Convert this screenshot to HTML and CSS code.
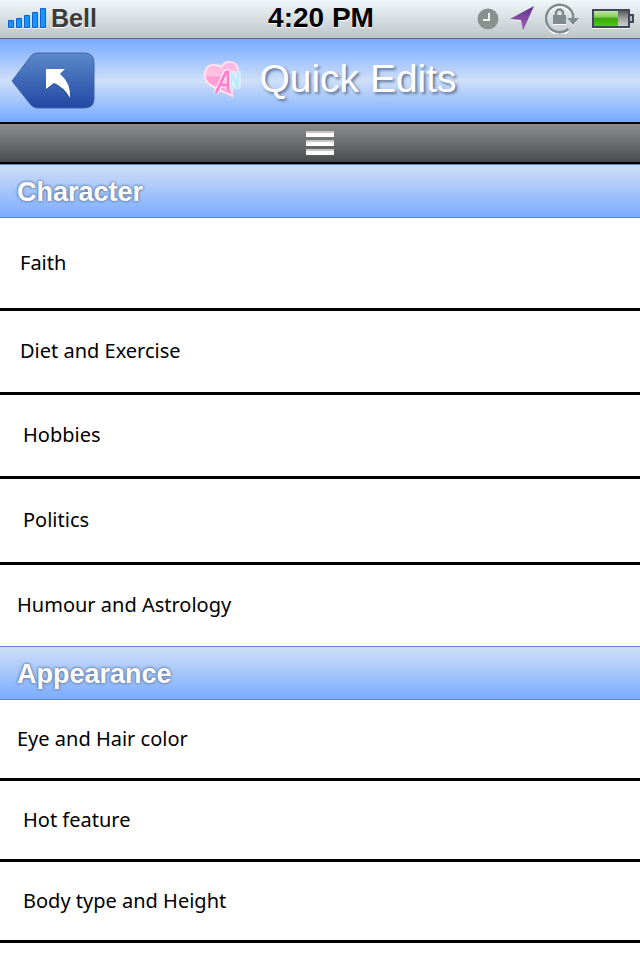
FILE: index.html
```html
<!DOCTYPE html>
<html lang="en">
<head>
<meta charset="utf-8">
<meta name="viewport" content="width=device-width, initial-scale=1">
<title>Quick Edits</title>
<link rel="stylesheet" href="styles.css">
</head>
<body>
<div class="status">
  <div class="carrier">
    <svg width="40" height="22" viewBox="0 0 40 22" aria-hidden="true">
      <g fill="#fff" opacity=".7"><path d="M0 21h6v1H0zM8 21h6v1H8zM16 21h6v1h-6zM24 21h6v1h-6zM32 21h6v1h-6z"/></g>
      <g fill="#1695fb" stroke="#1260cf"><path d="M.5 13.500h5v7h-5zM8.500 11.500h5v9h-5zM16.500 8.500h5v12h-5zM24.500 5.500h5v15h-5zM32.500 1.500h5v19h-5z"/></g>
    </svg>
    <span>Bell</span>
  </div>
  <div class="time">4:20 PM</div>
  <div class="indicators">
    <svg width="22" height="24" viewBox="0 0 22 24" aria-hidden="true">
      <circle cx="11" cy="14" r="10" fill="#fff" opacity=".7"/>
      <circle cx="11" cy="13" r="10.500" fill="#87928f"/>
      <path d="M12 7v7H6" fill="none" stroke="#f0f5f5" stroke-width="2"/>
    </svg>
    <svg width="24" height="28" viewBox="0 0 24 28" aria-hidden="true">
      <defs><linearGradient id="arrow" x1="0" y1="0" x2="0" y2="1"><stop offset="0" stop-color="#5c2f8c"/><stop offset="1" stop-color="#a767b4"/></linearGradient></defs>
      <path d="M24 3 0 16l11 1 2 11z" fill="#fff" opacity=".7"/>
      <path d="M24 2 0 15l11 1 2 11z" fill="url(#arrow)"/>
    </svg>
    <svg width="36" height="32" viewBox="0 0 36 32" aria-hidden="true">
      <path d="M23.500 28A13.700 13.700 0 1 1 28 14v4" fill="none" stroke="#fff" stroke-width="2" transform="translate(0 1)"/>
      <path d="M23.500 27A13.700 13.700 0 1 1 28 13v4" fill="none" stroke="#7f8c8b" stroke-width="2.500"/>
      <path d="M22 16h12l-6 8z" fill="#fff"/>
      <path d="M22 16h12l-6 7z" fill="#7f8c8b"/>
      <path d="M8 13h13v9H8z" fill="#7f8c8b"/>
      <path d="M11 14v-3a3.500 3.500 0 0 1 7 0v3" fill="none" stroke="#7f8c8b" stroke-width="2.500"/>
      <path d="M8 22.500h13" stroke="#fff"/>
    </svg>
    <svg width="42" height="22" viewBox="0 0 42 22" aria-hidden="true">
      <defs>
        <linearGradient id="charge" x1="0" y1="0" x2="0" y2="1"><stop offset="0" stop-color="#bde8a4"/><stop offset=".4" stop-color="#83cd55"/><stop offset=".5" stop-color="#3fa70d"/><stop offset="1" stop-color="#4fc90e"/></linearGradient>
        <linearGradient id="empty" x1="0" y1="0" x2="0" y2="1"><stop offset="0" stop-color="#505050"/><stop offset=".5" stop-color="#a0a0a0"/><stop offset="1" stop-color="#d6d6d6"/></linearGradient>
      </defs>
      <path d="M0 21h38v1H0z" fill="#fff" opacity=".8"/>
      <path d="M1 3h36v17H1z" fill="url(#empty)" stroke="#41465c" stroke-width="2"/>
      <path d="M2 4h24v15H2z" fill="url(#charge)"/>
      <path d="M38 8h3v7h-3" fill="#b7bdc1" stroke="#41465c" stroke-width="2"/>
    </svg>
  </div>
</div>

<header class="titlebar">
  <button class="back" type="button" aria-label="Back">
    <svg width="84" height="58" viewBox="0 0 84 58" aria-hidden="true">
      <defs><linearGradient id="btn" x1="0" y1="0" x2="0" y2="1"><stop offset="0" stop-color="#5b89ca"/><stop offset="1" stop-color="#2248a3"/></linearGradient></defs>
      <path d="M1 29 20 4q3-3 6-3h47q10 0 10 10v36q0 9-10 9H26q-3 0-6-3z" fill="url(#btn)" stroke="#3c64b3"/>
      <path d="M35 18h19l-5 5q11 9 10 25Q53 36 43 32l-8 6z" fill="#1d3c82" opacity=".6"/>
      <path d="M35 17h19l-5 5q11 9 10 24Q53 35 43 31l-8 6z" fill="#fff"/>
    </svg>
  </button>
  <div class="brand">
    <svg width="40" height="40" viewBox="0 0 40 40" aria-hidden="true">
      <defs><linearGradient id="heart" x1="0" y1="0" x2="0" y2="1"><stop offset="0" stop-color="#ffb3de"/><stop offset=".4" stop-color="#ffc4e4"/><stop offset=".45" stop-color="#ff9cd4"/><stop offset="1" stop-color="#ffa6da"/></linearGradient></defs>
      <path d="M18 8C23 0 34 2 35 11c0 8-6 12-6 21v5C20 32 9 29 4 23-1 15 3 6 10 6c4 0 6 0 8 2z" fill="url(#heart)" stroke="#ffe1f2" stroke-width="2"/>
      <path d="M28 30V13l7 16V12" fill="none" stroke="#e6f7ff" stroke-width="5"/>
      <path d="M28 30V13l7 16V12" fill="none" stroke="#bfe8fb" stroke-width="3"/>
      <path d="M13 34 23 13h2v18m-8-5h8" fill="none" stroke="#fff" stroke-width="5"/>
      <path d="M13 34 23 13h2v18m-8-5h8" fill="none" stroke="#ff7fca" stroke-width="3"/>
    </svg>
    <h1>Quick Edits</h1>
  </div>
</header>

<div class="toolbar">
  <button class="menu" type="button" aria-label="Menu"><i></i><i></i><i></i></button>
</div>

<main>
  <section>
    <h2>Character</h2>
    <ul>
      <li class="tall"><a href="#faith">Faith</a></li>
      <li class="medium"><a href="#diet">Diet and Exercise</a></li>
      <li class="medium inset"><a href="#hobbies">Hobbies</a></li>
      <li class="roomy inset"><a href="#politics">Politics</a></li>
      <li class="last outset"><a href="#humour">Humour and Astrology</a></li>
    </ul>
  </section>
  <section>
    <h2>Appearance</h2>
    <ul>
      <li class="outset"><a href="#eyes">Eye and Hair color</a></li>
      <li class="inset"><a href="#feature">Hot feature</a></li>
      <li class="inset"><a href="#body">Body type and Height</a></li>
    </ul>
  </section>
</main>
</body>
</html>
```
FILE: styles.css
```css
* {
  box-sizing: border-box;
}

body {
  margin: 0;
  background: #fff;
  color: #000;
  font-family: "Liberation Sans", Arial, sans-serif;
}

button {
  padding: 0;
  border: 0;
  background: none;
  cursor: pointer;
}

svg {
  display: block;
}

.status {
  display: grid;
  grid-template-columns: 1fr auto 1fr;
  align-items: center;
  height: 39px;
  padding: 0 6px 2px 8px;
  border-bottom: 1px solid #666b76;
  background: linear-gradient(#f0f7f9, #bdc5c9);
  font-weight: bold;
  text-shadow: 0 1px 1px #fff;
}

.carrier {
  display: flex;
  align-items: center;
  gap: 3px;
  color: #3b3b3b;
  font-size: 25px;
}

.time {
  font-size: 28px;
}

.indicators {
  display: flex;
  align-items: center;
  justify-content: flex-end;
  gap: 11px;
}

.titlebar {
  display: grid;
  grid-template-columns: 1fr auto 1fr;
  align-items: center;
  height: 83px;
  padding: 0 11px;
  background: linear-gradient(#76aaff, #cfdff8 50%, #76aaff);
}

.back {
  justify-self: start;
}

.brand {
  display: flex;
  align-items: center;
  gap: 16px;
  margin-left: 20px;
  padding-bottom: 4px;
}

h1 {
  margin: 0;
  color: #fff;
  font-size: 39px;
  font-weight: normal;
  line-height: 44px;
  text-shadow: 2px 2px 3px #5d7396;
}

.toolbar {
  display: flex;
  align-items: center;
  justify-content: center;
  height: 42px;
  border: solid #000;
  border-width: 2px 0;
  background: linear-gradient(#8d8e8e, #4b4c4e);
}

.menu {
  display: grid;
  gap: 3px;
}

.menu i {
  width: 28px;
  height: 6px;
  background: linear-gradient(#c9c5c9 30%, #fff 30%);
}

h2 {
  height: 54px;
  margin: 0;
  padding: 0 17px;
  border: solid #5a86cd;
  border-width: 1px 0;
  background: linear-gradient(#cfdff6, #7bacff);
  color: #fff;
  font-size: 27px;
  line-height: 54px;
  text-shadow: 0 0 3px #4c6690, 0 0 3px #7b94bd;
}

ul {
  margin: 0;
  padding: 0;
  list-style: none;
}

li {
  height: 81px;
  border-bottom: 3px solid #000;
}

li.medium {
  height: 84px;
}

li.roomy {
  height: 86px;
}

li.tall {
  height: 93px;
}

li.last {
  border-bottom: 0;
}

li a {
  display: flex;
  align-items: center;
  height: 100%;
  padding: 0 20px 2px;
  color: inherit;
  font-family: "Noto Sans", sans-serif;
  font-size: 20px;
  text-decoration: none;
}

li.inset a {
  padding-left: 23px;
}

li.outset a {
  padding-left: 17px;
}
```
